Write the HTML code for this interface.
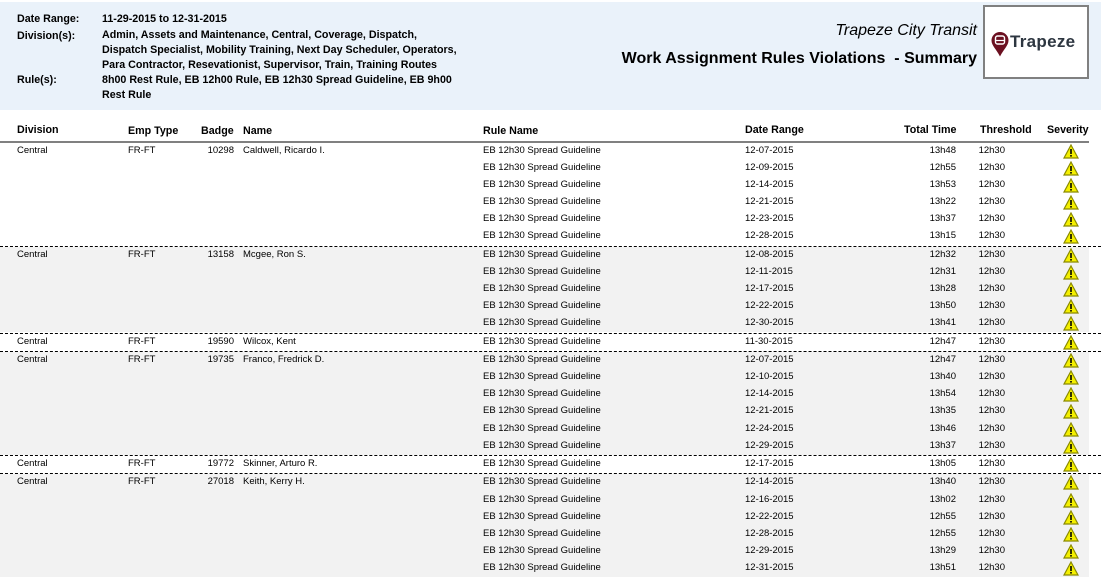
<!DOCTYPE html><html><head><style>
body{margin:0;width:1101px;height:575px;overflow:hidden;background:#fff;font-family:"Liberation Sans",Arial,sans-serif;color:#000;position:relative}
.hdr{position:absolute;left:0;top:2px;width:1101px;height:108px;background:#eaf2fa}
.t{position:absolute;font-size:10.7px;font-weight:bold;line-height:15px}
.row{position:absolute;left:0;width:1089px;height:17.3px;font-size:9.5px}
.row span{position:absolute;top:2px;white-space:nowrap}
.g{background:#f2f2f2}
.dash{position:absolute;left:0;width:1101px;border-top:1px dashed #000;z-index:2}
.tri{position:absolute;left:1063px;top:1px}
</style></head><body>
<div class="hdr"></div>
<div class="t" style="left:17px;top:12px">Date Range:</div>
<div class="t" style="left:102px;top:12px">11-29-2015 to 12-31-2015</div>
<div class="t" style="left:17px;top:29px">Division(s):</div>
<div class="t" style="left:102px;top:28px">Admin, Assets and Maintenance, Central, Coverage, Dispatch,<br>Dispatch Specialist, Mobility Training, Next Day Scheduler, Operators,<br>Para Contractor, Resevationist, Supervisor, Train, Training Routes</div>
<div class="t" style="left:17px;top:73px">Rule(s):</div>
<div class="t" style="left:102px;top:73px">8h00 Rest Rule, EB 12h00 Rule, EB 12h30 Spread Guideline, EB 9h00<br>Rest Rule</div>
<div style="position:absolute;right:124px;top:22px;font-size:16px;font-style:italic">Trapeze City Transit</div>
<div style="position:absolute;right:124px;top:50px;font-size:16px;font-weight:bold">Work Assignment Rules Violations&nbsp; - Summary</div>
<div style="position:absolute;left:983px;top:5px;width:102px;height:70px;border:2px solid #808080;background:#fff">
<svg style="position:absolute;left:6px;top:25px" width="18" height="25" viewBox="0 0 18 25"><path d="M9 0a8.5 8.5 0 0 1 8.5 8.5c0 5-5 9-8.5 16C5.5 17.5 0.5 13.5 0.5 8.5A8.5 8.5 0 0 1 9 0z" fill="#6b1020"/><rect x="4.5" y="4" width="9" height="8" rx="2" fill="none" stroke="#fff" stroke-width="1.4"/><line x1="4.5" y1="8.5" x2="13.5" y2="8.5" stroke="#fff" stroke-width="1.2"/></svg>
<div style="position:absolute;left:25px;top:25px;font-size:17px;font-weight:bold;color:#2d3640;letter-spacing:0.3px">Trapeze</div>
</div>
<div style="position:absolute;left:0;top:141px;width:1089px;border-top:2px solid #808080"></div>
<div class="t" style="left:17px;top:123px">Division</div>
<div class="t" style="left:128px;top:124px">Emp Type</div>
<div class="t" style="left:201px;top:124px">Badge</div>
<div class="t" style="left:243px;top:124px">Name</div>
<div class="t" style="left:483px;top:124px">Rule Name</div>
<div class="t" style="left:745px;top:123px">Date Range</div>
<div class="t" style="left:904px;top:123px">Total Time</div>
<div class="t" style="left:980px;top:123px">Threshold</div>
<div class="t" style="left:1047px;top:123px">Severity</div>
<div id="rows"></div>
<script>
var groups=[
["10298","Caldwell, Ricardo I.",[["12-07-2015","13h48"],["12-09-2015","12h55"],["12-14-2015","13h53"],["12-21-2015","13h22"],["12-23-2015","13h37"],["12-28-2015","13h15"]]],
["13158","Mcgee, Ron S.",[["12-08-2015","12h32"],["12-11-2015","12h31"],["12-17-2015","13h28"],["12-22-2015","13h50"],["12-30-2015","13h41"]]],
["19590","Wilcox, Kent",[["11-30-2015","12h47"]]],
["19735","Franco, Fredrick D.",[["12-07-2015","12h47"],["12-10-2015","13h40"],["12-14-2015","13h54"],["12-21-2015","13h35"],["12-24-2015","13h46"],["12-29-2015","13h37"]]],
["19772","Skinner, Arturo R.",[["12-17-2015","13h05"]]],
["27018","Keith, Kerry H.",[["12-14-2015","13h40"],["12-16-2015","13h02"],["12-22-2015","12h55"],["12-28-2015","12h55"],["12-29-2015","13h29"],["12-31-2015","13h51"]]]];
var tri='<svg class="tri" width="16" height="15" viewBox="0 0 16 15"><path d="M8 1L15 14H1Z" fill="#f5f000" stroke="#8a8a00" stroke-width="1.2"/><rect x="7.2" y="5" width="1.6" height="5" fill="#000"/><rect x="7.2" y="11" width="1.6" height="1.6" fill="#000"/></svg>';
var h='',y=142.5;
groups.forEach(function(g,gi){
 if(gi>0){h+='<div class="dash" style="top:'+(y+0.2)+'px"></div>';y+=1.2;}
 g[2].forEach(function(r,ri){
  h+='<div class="row'+(gi%2?' g':'')+'" style="top:'+y+'px">';
  if(ri==0)h+='<span style="left:17px">Central</span><span style="left:128px">FR-FT</span><span style="right:855px">'+g[0]+'</span><span style="left:243px">'+g[1]+'</span>';
  h+='<span style="left:483px">EB 12h30 Spread Guideline</span><span style="left:745px">'+r[0]+'</span><span style="right:133px">'+r[1]+'</span><span style="right:84px">12h30</span>'+tri+'</div>';
  y+=17.15;
 });
});
document.getElementById('rows').innerHTML=h;
</script>
</body></html>
